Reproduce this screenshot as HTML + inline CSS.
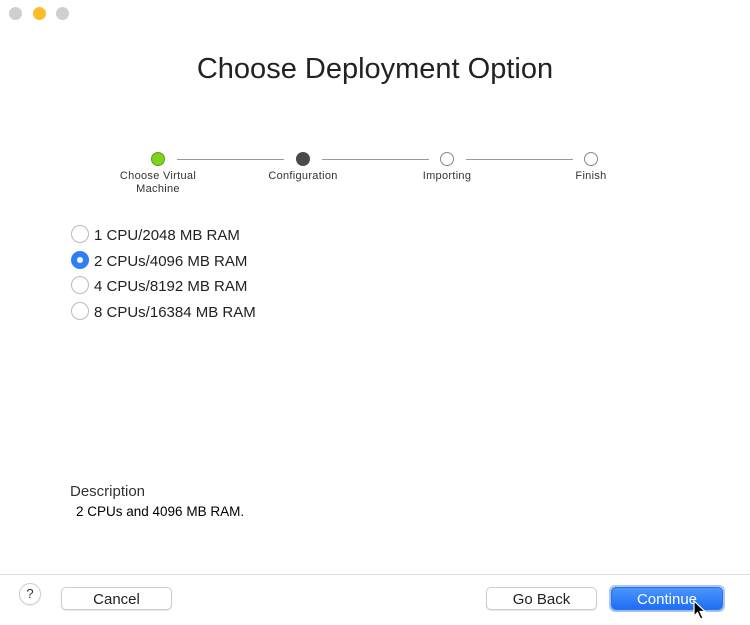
<!DOCTYPE html>
<html><head><style>
body{margin:0;width:750px;height:625px;background:#fff;font-family:"Liberation Sans",sans-serif;position:relative;overflow:hidden}
.a{position:absolute}
.tl{width:13px;height:13px;border-radius:50%;top:7px}
.dot{width:14px;height:14px;border-radius:50%;top:152px;box-sizing:border-box}
.ln{height:1px;background:#999;top:159px}
.lb{font-size:11px;color:#333;top:170px;text-align:center;width:110px;line-height:13px;letter-spacing:.3px}
.r{left:71px;width:18px;height:18px;border-radius:50%;border:1px solid #bbb;box-sizing:border-box;background:#fff}
.rt{left:94px;font-size:15px;color:#222}
.btn{top:587px;height:23px;border:1px solid #ccc;border-radius:5px;box-sizing:border-box;background:#fff;font-size:15px;text-align:center;line-height:24px;color:#222;box-shadow:0 1px 1px rgba(0,0,0,.1)}
</style></head><body>
<div class="a tl" style="left:9px;background:#cfcfcf"></div>
<div class="a tl" style="left:33px;background:#fdbc2e"></div>
<div class="a tl" style="left:56px;background:#cfcfcf"></div>
<div class="a" style="left:0;width:750px;top:53px;text-align:center;font-size:29px;color:#222">Choose Deployment Option</div>
<div class="a ln" style="left:177px;width:107px"></div>
<div class="a ln" style="left:322px;width:107px"></div>
<div class="a ln" style="left:466px;width:107px"></div>
<div class="a dot" style="left:151px;background:#7ed321;border:1px solid #5a9e18"></div>
<div class="a dot" style="left:296px;background:#4a4a4a"></div>
<div class="a dot" style="left:440px;border:1px solid #888;background:#fff"></div>
<div class="a dot" style="left:584px;border:1px solid #888;background:#fff"></div>
<div class="a lb" style="left:103px;top:170px">Choose Virtual<br>Machine</div>
<div class="a lb" style="left:248px">Configuration</div>
<div class="a lb" style="left:392px">Importing</div>
<div class="a lb" style="left:536px">Finish</div>
<div class="a r" style="top:225px"></div><div class="a rt" style="top:227px">1 CPU/2048 MB RAM</div>
<div class="a r" style="top:251px;background:#2f7ef6;border-color:#2f7ef6"><div class="a" style="left:5px;top:5px;width:6px;height:6px;border-radius:50%;background:#fff"></div></div><div class="a rt" style="top:253px">2 CPUs/4096 MB RAM</div>
<div class="a r" style="top:276px"></div><div class="a rt" style="top:278px">4 CPUs/8192 MB RAM</div>
<div class="a r" style="top:302px"></div><div class="a rt" style="top:304px">8 CPUs/16384 MB RAM</div>
<div class="a" style="left:70px;top:483px;font-size:15px;color:#333">Description</div>
<div class="a" style="left:76px;top:504px;font-size:13.5px;color:#000">2 CPUs and 4096 MB RAM.</div>
<div class="a" style="left:0;top:574px;width:750px;height:1px;background:#ddd"></div>
<div class="a" style="left:19px;top:583px;width:22px;height:22px;border-radius:50%;border:1px solid #ccc;box-sizing:border-box;text-align:center;font-size:13px;line-height:20px;color:#333;box-shadow:0 1px 1px rgba(0,0,0,.1)">?</div>
<div class="a btn" style="left:61px;width:111px">Cancel</div>
<div class="a btn" style="left:486px;width:111px">Go Back</div>
<div class="a" style="left:609px;top:585px;width:116px;height:27px;border-radius:6px;background:#a9c8f5"></div>
<div class="a btn" style="left:611px;width:112px;background:linear-gradient(#4b95fb,#1f6ef3);border-color:#2a72e8;color:#fff">Continue</div>
<svg class="a" style="left:693px;top:600px" width="14" height="22" viewBox="0 0 14 22"><path d="M1 1 L1 16 L4.5 12.5 L7.5 19 L10 18 L7 11.5 L12 11.5 Z" fill="#000" stroke="#fff" stroke-width="1.2"/></svg>
</body></html>
